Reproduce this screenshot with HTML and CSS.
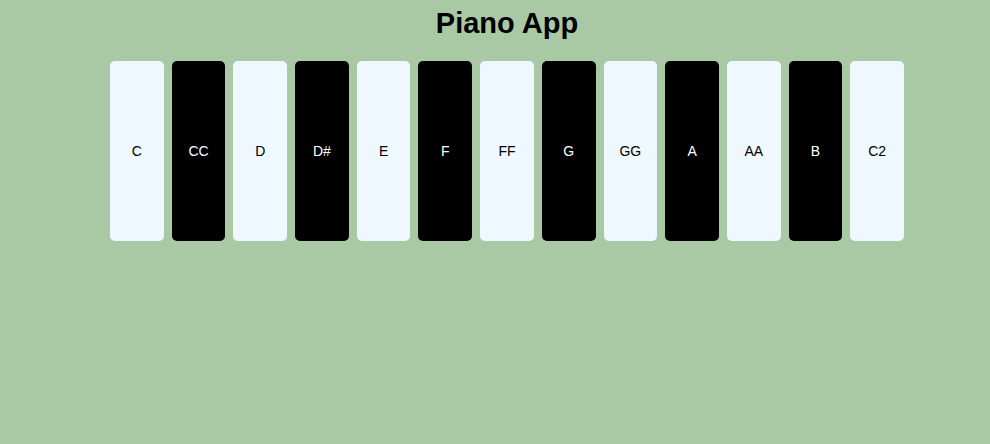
FILE: index.html
```html
<!DOCTYPE html>
<html lang="en">
<head>
    <meta charset="UTF-8">
    <meta name="viewport" content="width=device-width, initial-scale=1.0">
    <title>Piano App</title>
    <link rel="stylesheet" href="styles.css">
</head>
<body>
    <h1>Piano App</h1>
    <div class="piano">
        <div class="key white">C</div>
        <div class="key black">CC</div>
        <div class="key white">D</div>
        <div class="key black">D#</div>
        <div class="key white">E</div>
        <div class="key black">F</div>
        <div class="key white">FF</div>
        <div class="key black">G</div>
        <div class="key white">GG</div>
        <div class="key black">A</div>
        <div class="key white">AA</div>
        <div class="key black">B</div>
        <div class="key white">C2</div>
    </div>
</body>
</html>
```

FILE: styles.css
```css
body {
    font-family: "Liberation Sans", Arial, sans-serif;
    background-color: #a9c9a5;
    margin: 0 0 0 24px;
    text-align: center;
}
h1 {
    font-size: 29px;
    margin: 7px 0 21px;
    line-height: 33px;
}
.piano {
    display: flex;
    justify-content: center;
}
.key {
    width: 53.7px;
    height: 180px;
    margin: 0 4px;
    border-radius: 5px;
    display: flex;
    align-items: center;
    justify-content: center;
    font-size: 14px;
}
.white {
    background-color: #f0f8ff;
    color: black;
}
.black {
    background-color: black;
    color: white;
}
```
